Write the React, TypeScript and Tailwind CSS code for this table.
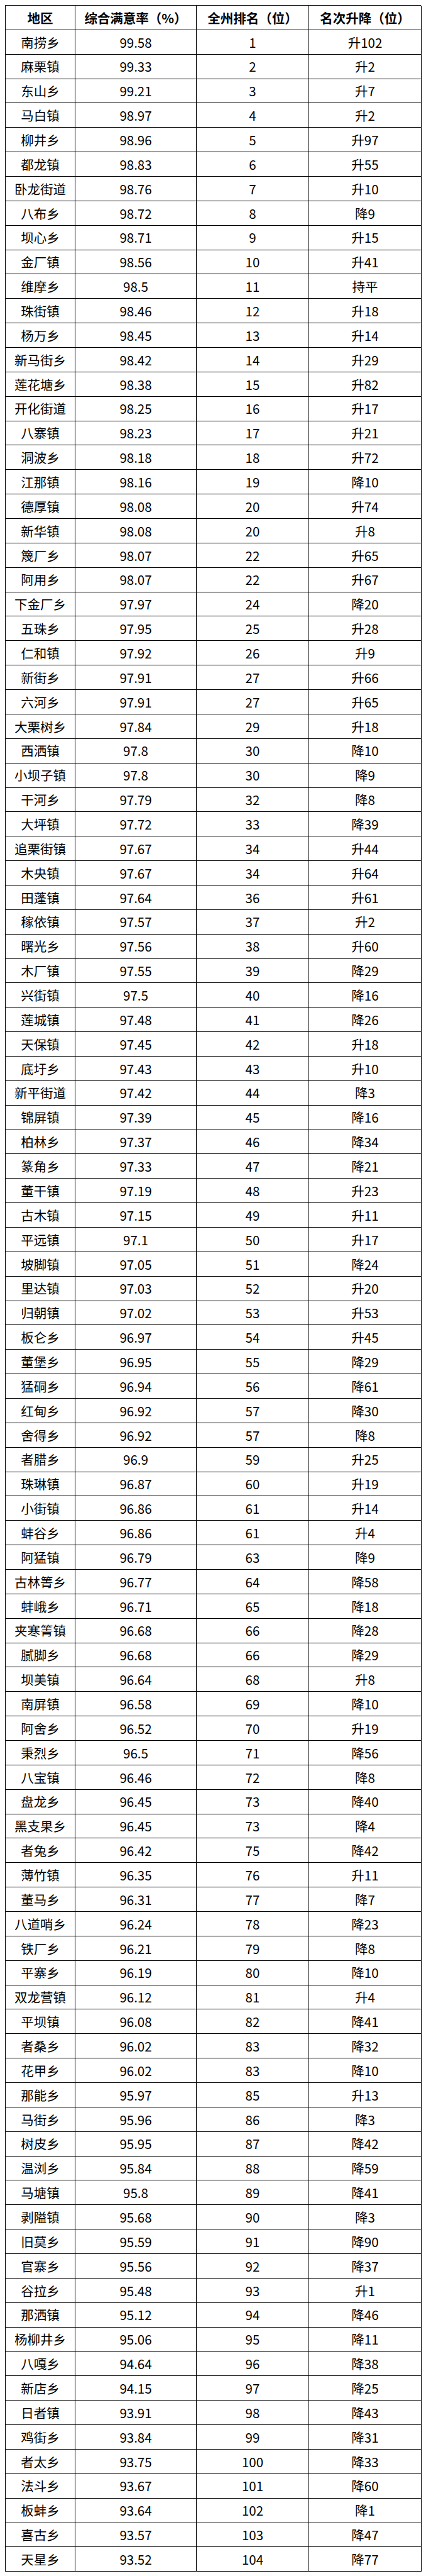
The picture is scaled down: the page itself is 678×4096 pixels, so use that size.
const rows: [string, string, number, string][] = [
  ['南捞乡', '99.58', 1, '升102'],
  ['麻栗镇', '99.33', 2, '升2'],
  ['东山乡', '99.21', 3, '升7'],
  ['马白镇', '98.97', 4, '升2'],
  ['柳井乡', '98.96', 5, '升97'],
  ['都龙镇', '98.83', 6, '升55'],
  ['卧龙街道', '98.76', 7, '升10'],
  ['八布乡', '98.72', 8, '降9'],
  ['坝心乡', '98.71', 9, '升15'],
  ['金厂镇', '98.56', 10, '升41'],
  ['维摩乡', '98.5', 11, '持平'],
  ['珠街镇', '98.46', 12, '升18'],
  ['杨万乡', '98.45', 13, '升14'],
  ['新马街乡', '98.42', 14, '升29'],
  ['莲花塘乡', '98.38', 15, '升82'],
  ['开化街道', '98.25', 16, '升17'],
  ['八寨镇', '98.23', 17, '升21'],
  ['洞波乡', '98.18', 18, '升72'],
  ['江那镇', '98.16', 19, '降10'],
  ['德厚镇', '98.08', 20, '升74'],
  ['新华镇', '98.08', 20, '升8'],
  ['篾厂乡', '98.07', 22, '升65'],
  ['阿用乡', '98.07', 22, '升67'],
  ['下金厂乡', '97.97', 24, '降20'],
  ['五珠乡', '97.95', 25, '升28'],
  ['仁和镇', '97.92', 26, '升9'],
  ['新街乡', '97.91', 27, '升66'],
  ['六河乡', '97.91', 27, '升65'],
  ['大栗树乡', '97.84', 29, '升18'],
  ['西洒镇', '97.8', 30, '降10'],
  ['小坝子镇', '97.8', 30, '降9'],
  ['干河乡', '97.79', 32, '降8'],
  ['大坪镇', '97.72', 33, '降39'],
  ['追栗街镇', '97.67', 34, '升44'],
  ['木央镇', '97.67', 34, '升64'],
  ['田蓬镇', '97.64', 36, '升61'],
  ['稼依镇', '97.57', 37, '升2'],
  ['曙光乡', '97.56', 38, '升60'],
  ['木厂镇', '97.55', 39, '降29'],
  ['兴街镇', '97.5', 40, '降16'],
  ['莲城镇', '97.48', 41, '降26'],
  ['天保镇', '97.45', 42, '升18'],
  ['底圩乡', '97.43', 43, '升10'],
  ['新平街道', '97.42', 44, '降3'],
  ['锦屏镇', '97.39', 45, '降16'],
  ['柏林乡', '97.37', 46, '降34'],
  ['篆角乡', '97.33', 47, '降21'],
  ['董干镇', '97.19', 48, '升23'],
  ['古木镇', '97.15', 49, '升11'],
  ['平远镇', '97.1', 50, '升17'],
  ['坡脚镇', '97.05', 51, '降24'],
  ['里达镇', '97.03', 52, '升20'],
  ['归朝镇', '97.02', 53, '升53'],
  ['板仑乡', '96.97', 54, '升45'],
  ['董堡乡', '96.95', 55, '降29'],
  ['猛硐乡', '96.94', 56, '降61'],
  ['红甸乡', '96.92', 57, '降30'],
  ['舍得乡', '96.92', 57, '降8'],
  ['者腊乡', '96.9', 59, '升25'],
  ['珠琳镇', '96.87', 60, '升19'],
  ['小街镇', '96.86', 61, '升14'],
  ['蚌谷乡', '96.86', 61, '升4'],
  ['阿猛镇', '96.79', 63, '降9'],
  ['古林箐乡', '96.77', 64, '降58'],
  ['蚌峨乡', '96.71', 65, '降18'],
  ['夹寒箐镇', '96.68', 66, '降28'],
  ['腻脚乡', '96.68', 66, '降29'],
  ['坝美镇', '96.64', 68, '升8'],
  ['南屏镇', '96.58', 69, '降10'],
  ['阿舍乡', '96.52', 70, '升19'],
  ['秉烈乡', '96.5', 71, '降56'],
  ['八宝镇', '96.46', 72, '降8'],
  ['盘龙乡', '96.45', 73, '降40'],
  ['黑支果乡', '96.45', 73, '降4'],
  ['者兔乡', '96.42', 75, '降42'],
  ['薄竹镇', '96.35', 76, '升11'],
  ['董马乡', '96.31', 77, '降7'],
  ['八道哨乡', '96.24', 78, '降23'],
  ['铁厂乡', '96.21', 79, '降8'],
  ['平寨乡', '96.19', 80, '降10'],
  ['双龙营镇', '96.12', 81, '升4'],
  ['平坝镇', '96.08', 82, '降41'],
  ['者桑乡', '96.02', 83, '降32'],
  ['花甲乡', '96.02', 83, '降10'],
  ['那能乡', '95.97', 85, '升13'],
  ['马街乡', '95.96', 86, '降3'],
  ['树皮乡', '95.95', 87, '降42'],
  ['温浏乡', '95.84', 88, '降59'],
  ['马塘镇', '95.8', 89, '降41'],
  ['剥隘镇', '95.68', 90, '降3'],
  ['旧莫乡', '95.59', 91, '降90'],
  ['官寨乡', '95.56', 92, '降37'],
  ['谷拉乡', '95.48', 93, '升1'],
  ['那洒镇', '95.12', 94, '降46'],
  ['杨柳井乡', '95.06', 95, '降11'],
  ['八嘎乡', '94.64', 96, '降38'],
  ['新店乡', '94.15', 97, '降25'],
  ['日者镇', '93.91', 98, '降43'],
  ['鸡街乡', '93.84', 99, '降31'],
  ['者太乡', '93.75', 100, '降33'],
  ['法斗乡', '93.67', 101, '降60'],
  ['板蚌乡', '93.64', 102, '降1'],
  ['喜古乡', '93.57', 103, '降47'],
  ['天星乡', '93.52', 104, '降77'],
];

const headers = ['地区', '综合满意率（%）', '全州排名（位）', '名次升降（位）'];

const cell =
  'flex h-[38.86px] items-center justify-center border-r border-b border-black whitespace-nowrap';

const App = () => {
  return (
    <div className="min-h-screen bg-white pt-[8px] pl-[8px] text-black [font-family:'Noto_Sans_CJK_SC','Noto_Sans',sans-serif]">
      <div className="grid w-[662px] grid-cols-[111px_193px_179px_179px] border-t border-l border-black text-[20.5px] leading-none">
        {headers.map((h) => (
          <div key={h} className={`${cell} font-bold`}>
            {h}
          </div>
        ))}
        {rows.map(([name, rate, rank, change], i) => (
          <div key={i} className="contents">
            <div className={cell}>{name}</div>
            <div className={cell}>{rate}</div>
            <div className={cell}>{rank}</div>
            <div className={cell}>{change}</div>
          </div>
        ))}
      </div>
    </div>
  );
};

export default App;
